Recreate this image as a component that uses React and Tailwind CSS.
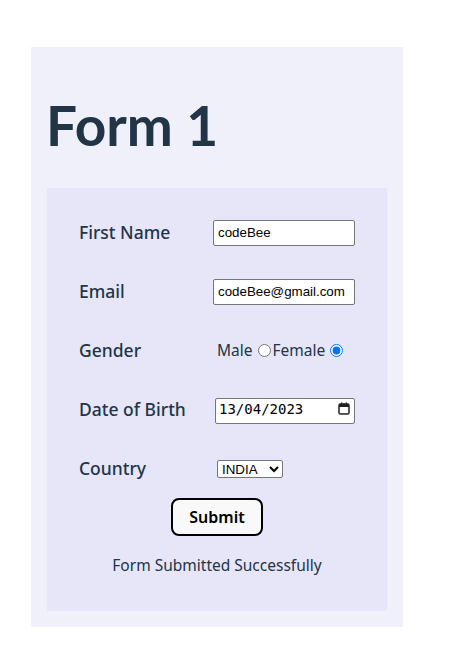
import React from 'react'

const ink = 'text-[#213547]'

function Row({ label, children }) {
  return (
    <div className="flex items-center h-[59px]">
      <div className={`w-[134px] text-[17.5px] font-medium ${ink}`}>{label}</div>
      <div className="flex items-center">{children}</div>
    </div>
  )
}

function CalendarIcon() {
  return (
    <svg width="12" height="13" viewBox="0 0 12 13" className="absolute right-[5px] top-[6px] pointer-events-none">
      <rect x="1" y="2" width="10" height="10" rx="1.5" fill="none" stroke="#222" strokeWidth="1.5" />
      <rect x="1" y="2" width="10" height="3" fill="#222" />
      <rect x="3" y="0.5" width="1.5" height="2.5" fill="#222" />
      <rect x="7.5" y="0.5" width="1.5" height="2.5" fill="#222" />
    </svg>
  )
}

export default function App() {
  return (
    <div className="min-h-[648px] bg-white pt-[47px] pl-[31px] font-['Noto_Sans',sans-serif]">
      <div className="w-[372px] bg-[#f0f0fa] px-4 pb-4 pt-[49px]">
        <h1 className={`text-[55px] leading-[58px] font-bold ml-[-1px] font-['Lato',sans-serif] ${ink}`}>Form 1</h1>
        <form className="mt-[34px] bg-[#e6e6f8] pl-8 pt-[15px] pb-[10px]" onSubmit={(e) => e.preventDefault()}>
          <Row label="First Name">
            <input
              type="text"
              defaultValue="codeBee"
              className="w-[142px] h-[26px] px-[4px] border border-[#767676] rounded-[2px] bg-white text-black text-[13.33px] font-['Liberation_Sans',sans-serif]"
            />
          </Row>
          <Row label="Email">
            <input
              type="email"
              defaultValue="codeBee@gmail.com"
              className="w-[142px] h-[26px] px-[4px] border border-[#767676] rounded-[2px] bg-white text-black text-[13.33px] font-['Liberation_Sans',sans-serif]"
            />
          </Row>
          <Row label="Gender">
            <label className={`ml-[4px] text-[15.5px] ${ink} flex items-center`}>
              Male
              <input type="radio" name="gender" className="w-[13px] h-[13px] ml-[5px] mr-[2px]" />
            </label>
            <label className={`text-[15.5px] ${ink} flex items-center`}>
              Female
              <input type="radio" name="gender" defaultChecked className="w-[13px] h-[13px] ml-[5px]" />
            </label>
          </Row>
          <Row label="Date of Birth">
            <div className="relative ml-[2px]">
              <input
                type="text"
                defaultValue="13/04/2023"
                className="w-[140px] h-[26px] pl-[3px] pb-[4px] border border-[#767676] rounded-[2px] bg-white text-black text-[14px] font-['DejaVu_Sans_Mono',monospace]"
              />
              <CalendarIcon />
            </div>
          </Row>
          <Row label="Country">
            <select
              defaultValue="INDIA"
              className="ml-[4px] w-[66px] h-[18px] border border-[#767676] rounded-[2px] bg-white text-black text-[13.33px] font-['Liberation_Sans',sans-serif]"
            >
              <option>INDIA</option>
              <option>USA</option>
              <option>UK</option>
            </select>
          </Row>
          <div className="flex flex-col items-center pr-8">
            <button
              type="submit"
              className="w-[92px] h-[38px] border-2 border-black rounded-[8px] bg-[#f9f9f9] text-[16px] font-semibold text-black"
            >
              Submit
            </button>
            <p className={`mt-[19px] h-[20px] leading-[20px] text-[15.5px] ${ink}`}>Form Submitted Successfully</p>
            <div className="h-[26px]" />
          </div>
        </form>
      </div>
    </div>
  )
}
